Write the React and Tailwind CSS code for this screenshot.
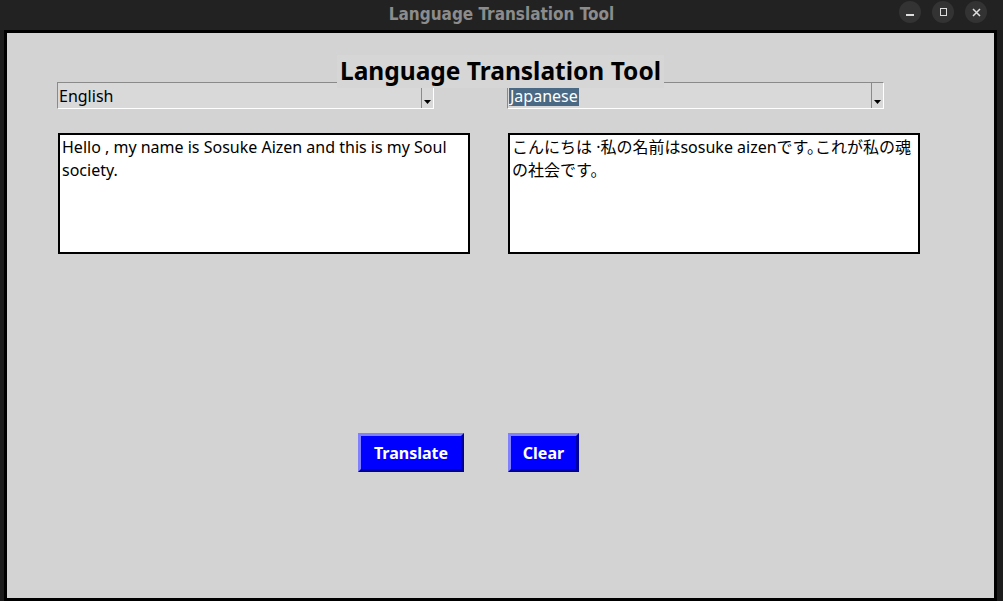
import React from "react";

const font = { fontFamily: '"Noto Sans", "Noto Sans CJK JP", sans-serif' };

const Combo = ({ value, selected }) => (
  <div className="flex h-[27px] w-[377px] border-t border-l border-[#8a8a8a] border-b border-r border-b-white border-r-white bg-[#d9d9d9]">
    <div className="flex flex-1 items-center pl-[1px] text-[16px] leading-none text-black">
      <span className={selected ? "bg-[#4a6984] text-white px-[1px] py-[2px]" : "py-[2px]"}>
        {value}
      </span>
    </div>
    <div className="flex w-[12px] items-end justify-center border-l border-[#8a8a8a] pb-[4px]">
      <svg width="7" height="4" viewBox="0 0 7 4">
        <path d="M0 0 H7 L3.5 4 Z" fill="#000" />
      </svg>
    </div>
  </div>
);

const TextBox = ({ children }) => (
  <div className="h-[121px] w-[412px] border-2 border-black bg-white px-[2px] pt-[1px] text-[16px] leading-[23px] text-black">
    {children}
  </div>
);

const Btn = ({ children, w }) => (
  <button
    className={`${w} h-[39px] border-[3px] border-t-[#8080ff] border-l-[#8080ff] border-b-[#0000a0] border-r-[#0000a0] bg-[#0000ff] text-[16px] font-bold text-white`}
  >
    {children}
  </button>
);

export default function App() {
  return (
    <div className="h-[601px] w-[1003px] overflow-hidden bg-[#1c1c1c]" style={font}>
      {/* title bar */}
      <div className="relative flex h-[30px] items-center justify-center bg-[#222222]">
        <span
          className="text-[17px] font-bold text-[#8c8c8c]"
          style={{ fontFamily: '"DejaVu Sans Condensed", "DejaVu Sans", sans-serif' }}
        >
          Language Translation Tool
        </span>
        <div className="absolute right-[16px] top-[0px] flex h-[24px] items-center gap-[11px]">
          <div className="flex h-[22px] w-[22px] items-center justify-center rounded-full bg-[#333333]">
            <div className="mt-[6px] h-[1.5px] w-[8px] bg-[#dddddd]" />
          </div>
          <div className="flex h-[22px] w-[22px] items-center justify-center rounded-full bg-[#333333]">
            <div className="h-[8px] w-[7px] border-[1.5px] border-[#dddddd]" />
          </div>
          <div className="flex h-[22px] w-[22px] items-center justify-center rounded-full bg-[#333333]">
            <svg width="9" height="9" viewBox="0 0 9 9">
              <path d="M1 1 L8 8 M8 1 L1 8" stroke="#dddddd" strokeWidth="1.5" />
            </svg>
          </div>
        </div>
      </div>

      {/* window */}
      <div className="ml-[4px] flex h-[571px] w-[993px] flex-col border-[3px] border-black bg-[#d3d3d3]">
        <div className="relative z-10 mt-[22px] flex justify-center">
          <div className="flex h-[33px] items-center bg-[#d6d6d6] px-[3px] text-[24.5px] font-bold leading-none text-black">
            Language Translation Tool
          </div>
        </div>

        <div className="-mt-[6px] flex gap-[73px] pl-[50px]">
          <Combo value="English" />
          <Combo value="Japanese" selected />
        </div>

        <div className="mt-[24px] flex gap-[38px] pl-[51px]">
          <TextBox>Hello , my name is Sosuke Aizen and this is my Soul society.</TextBox>
          <TextBox>
            <span className="[font-feature-settings:'halt']">
              こんにちは ·私の名前はsosuke aizenです。これが私の魂の社会です。
            </span>
          </TextBox>
        </div>

        <div className="mt-[179px] flex gap-[44px] pl-[351px]">
          <Btn w="w-[106px]">Translate</Btn>
          <Btn w="w-[71px]">Clear</Btn>
        </div>
      </div>
    </div>
  );
}
